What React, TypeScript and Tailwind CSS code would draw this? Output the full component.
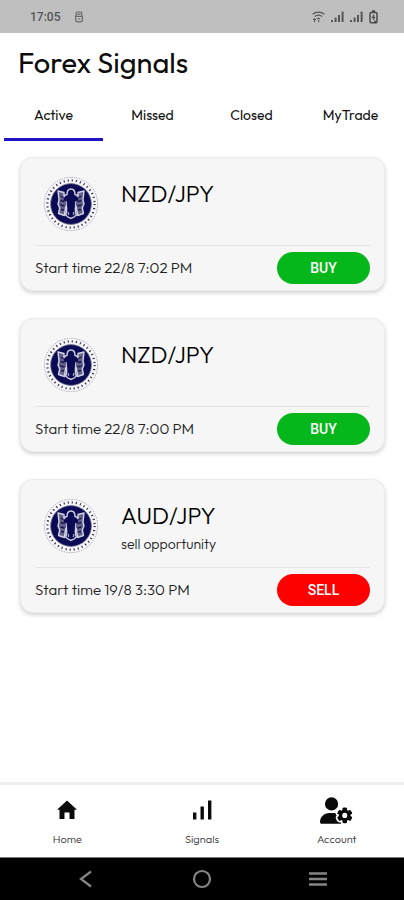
import { FaUserGear } from "react-icons/fa6";

type Signal = {
  pair: string;
  note?: string;
  time: string;
  side: "BUY" | "SELL";
};

const signals: Signal[] = [
  { pair: "NZD/JPY", time: "22/8 7:02 PM", side: "BUY" },
  { pair: "NZD/JPY", time: "22/8 7:00 PM", side: "BUY" },
  { pair: "AUD/JPY", note: "sell opportunity", time: "19/8 3:30 PM", side: "SELL" },
];

const tabs = ["Active", "Missed", "Closed", "MyTrade"];

function CellBars() {
  return (
    <svg width="13" height="12" viewBox="0 0 13 12" fill="#555" aria-hidden="true">
      <rect x="0" y="9" width="2" height="2" />
      <rect x="3.6" y="6.6" width="2" height="4.4" />
      <rect x="7" y="4" width="2" height="7" />
      <rect x="10.6" y="0.6" width="2" height="10.4" />
    </svg>
  );
}

function StatusBar() {
  return (
    <div className="flex h-[33px] items-center bg-[#bfbfbf] pr-[26px] pl-[30px] text-[#555]">
      <span className="font-[Roboto,sans-serif] text-[12px] font-medium">17:05</span>
      <svg className="ml-[14px]" width="10" height="12" viewBox="0 0 10 12" fill="none" stroke="#6b6b6b" strokeWidth="1.2" aria-hidden="true">
        <path d="M2.2 5V2.2q0-1.2 1.2-1.2h3.2q1.2 0 1.2 1.2V5M3.4 3.2h3.2" />
        <path d="M1.6 5.4h6.8v3.4q0 2-2 2H3.6q-2 0-2-2zM3.8 8h2.4" />
      </svg>
      <div className="ml-auto flex items-center gap-[6px]">
        <svg width="13" height="12" viewBox="0 0 13 12" fill="none" stroke="#555" strokeWidth="1.3" aria-hidden="true">
          <path d="M.6 3.2C4 .3 9 .3 12.4 3.2M2.8 5.6c2.2-1.8 5.2-1.8 7.4 0M5 8c1-.8 2-.8 3 0" />
          <path d="M2.5 7.5v3.8M1 9l1.5-1.6L4 9M6.6 9v2.4" strokeWidth="1" />
        </svg>
        <CellBars />
        <CellBars />
        <svg width="9" height="14" viewBox="0 0 9 14" fill="none" stroke="#4b4b4b" strokeWidth="1.5" aria-hidden="true">
          <path d="M3 1h3M2 2.4h5l1 1v8.4l-.8.9H1.8l-.8-.9V3.4z" />
          <path d="M5 4.8L3.5 7.4h2L4.2 10M5 11.4h2.4" strokeWidth="1.2" />
        </svg>
      </div>
    </div>
  );
}

function Seal() {
  return (
    <svg className="size-14 shrink-0" viewBox="0 0 56 56" fill="none" aria-hidden="true">
      <circle cx="28" cy="28" r="26.6" fill="#f7f7fa" stroke="#9a9aa6" strokeWidth=".8" strokeDasharray="1.5 1" />
      <circle cx="28" cy="28" r="23.6" stroke="#34344a" strokeWidth="2.2" strokeDasharray="1.2 2.92" />
      <circle cx="28" cy="28" r="20.4" fill="#0a0a55" stroke="#77778f" strokeWidth=".8" />
      <g fill="#62628a" stroke="#d2d2de" strokeWidth="1.4" strokeLinejoin="round">
        <path d="M15 15l6 1.5v4l3 2-.5 14.500-2 2.500-6-2 1.200-5.500-1.700-4 1-4z" />
        <path d="M41 15l-6 1.5v4l-3 2 .5 14.500 2 2.500 6-2-1.200-5.500 1.700-4-1-4z" />
      </g>
      <path
        d="M17.500 20l3 1.500M17.500 24.500l4 1M17.500 29l4 1M18 33.500l3.500.5M38.500 20l-3 1.500M38.500 24.500l-4 1M38.500 29l-4 1M38 33.500l-3.500.5"
        stroke="#17174f"
        strokeWidth="1.3"
      />
      <path d="M21 19.500l3-1c0-3.500 1.200-5.500 4-5.500s4 2 4 5.500l3 1" stroke="#d2d2de" strokeWidth="1.4" />
      <path
        d="M25.800 16.500q2.200-2.600 4.400 0l.8 3.500 4.200 1.600v2.800l-3 .8-.6 6-1.800 3.300h-3.600l-1.800-3.300-.6-6-3-.8v-2.800l4.200-1.600z"
        fill="#0a0a55"
      />
      <path d="M23 30l-1.500 7.500 3 3.300L28 42.500l3.500-1.700 3-3.300L33 30" stroke="#d2d2de" strokeWidth="1.400" />
      <path d="M25.500 36v3M30.500 36v3" stroke="#a5a5bb" strokeWidth="1.3" />
      <path d="M28 34v6M26.500 37h3" stroke="#0a0a55" strokeWidth="1.4" />
    </svg>
  );
}

function SignalCard({ signal }: { signal: Signal }) {
  return (
    <article className="rounded-[13px] border border-[#e9ecee] bg-[#f6f6f6] px-[14px] shadow-[0_2px_4px_rgba(0,0,0,0.18)]">
      <div className="flex h-[88px] border-b border-[#e2e5e7] pt-[18px] pl-2">
        <Seal />
        <div className="pl-[22px]">
          <h2 className="text-[23px] leading-9 font-light text-black">{signal.pair}</h2>
          {signal.note && <p className="text-[14px] leading-5 font-light text-[#222]">{signal.note}</p>}
        </div>
      </div>
      <div className="flex h-11 items-center justify-between">
        <p className="text-[15px] font-light text-[#222]">Start time {signal.time}</p>
        <button
          type="button"
          className={`h-8 w-[93px] rounded-full font-[Roboto,sans-serif] text-[14px] font-medium text-white ${
            signal.side === "BUY" ? "bg-[#05b71b]" : "bg-[#fd0000]"
          }`}
        >
          {signal.side}
        </button>
      </div>
    </article>
  );
}

function BottomNav() {
  const item = "flex flex-1 flex-col items-center gap-1 text-[11px] leading-[18px] font-light text-[#333]";
  const icon = "flex h-8 items-center justify-center text-[#0a0a0a]";
  return (
    <nav className="flex h-[75px] border-t-[3px] border-[#eeeeee] bg-white pt-[9px]">
      <button type="button" className={item}>
        <span className={icon}>
          <svg width="20" height="20" viewBox="0 0 20 20" fill="currentColor" aria-hidden="true">
            <path d="M10 .5L20 9.800h-2.500V19h-5v-6.500h-5V19h-5V9.800H0z" />
          </svg>
        </span>
        Home
      </button>
      <button type="button" className={item}>
        <span className={icon}>
          <svg width="20" height="20" viewBox="0 0 20 20" fill="currentColor" aria-hidden="true">
            <rect x="1" y="12.500" width="3.400" height="7" />
            <rect x="8.500" y="6.500" width="3.400" height="13" />
            <rect x="16" y="0.500" width="3.400" height="19" />
          </svg>
        </span>
        Signals
      </button>
      <button type="button" className={item}>
        <span className={icon}>
          <FaUserGear size={33} />
        </span>
        Account
      </button>
    </nav>
  );
}

function SystemNav() {
  const button = "flex w-5 items-center justify-center";
  return (
    <div className="flex h-[43px] items-center justify-center gap-24 border-t border-[#777] bg-black text-[#858585]">
      <button type="button" aria-label="Back" className={button}>
        <svg width="20" height="20" viewBox="0 0 20 20" fill="none" stroke="currentColor" strokeWidth="2.2">
          <path d="M15 2.500L5 10l10 7.500" />
        </svg>
      </button>
      <button type="button" aria-label="Home screen" className={button}>
        <svg width="20" height="20" viewBox="0 0 20 20" fill="none" stroke="currentColor" strokeWidth="2.2">
          <circle cx="10" cy="10" r="8" />
        </svg>
      </button>
      <button type="button" aria-label="Recent apps" className={button}>
        <svg width="20" height="20" viewBox="0 0 20 20" fill="none" stroke="currentColor" strokeWidth="2.6">
          <path d="M1 4.500h18M1 10h18M1 15.500h18" />
        </svg>
      </button>
    </div>
  );
}

export default function App() {
  return (
    <div className="flex min-h-screen flex-col bg-white font-[Outfit,Lato,sans-serif]">
      <StatusBar />
      <h1 className="px-[18px] pt-3 text-[29px] leading-9 text-[#0c0c0c]">Forex Signals</h1>
      <div role="tablist" className="mt-3 flex px-1">
        {tabs.map((tab, i) => (
          <button
            key={tab}
            type="button"
            role="tab"
            aria-selected={i === 0}
            className={`h-12 flex-1 border-b-[3px] text-[14px] text-[#111] ${
              i === 0 ? "border-[#2114c8]" : "border-transparent"
            }`}
          >
            {tab}
          </button>
        ))}
      </div>
      <main className="flex flex-1 flex-col gap-[27px] pt-4 pr-[19px] pb-6 pl-5">
        {signals.map((signal) => (
          <SignalCard key={signal.time} signal={signal} />
        ))}
      </main>
      <BottomNav />
      <SystemNav />
    </div>
  );
}
